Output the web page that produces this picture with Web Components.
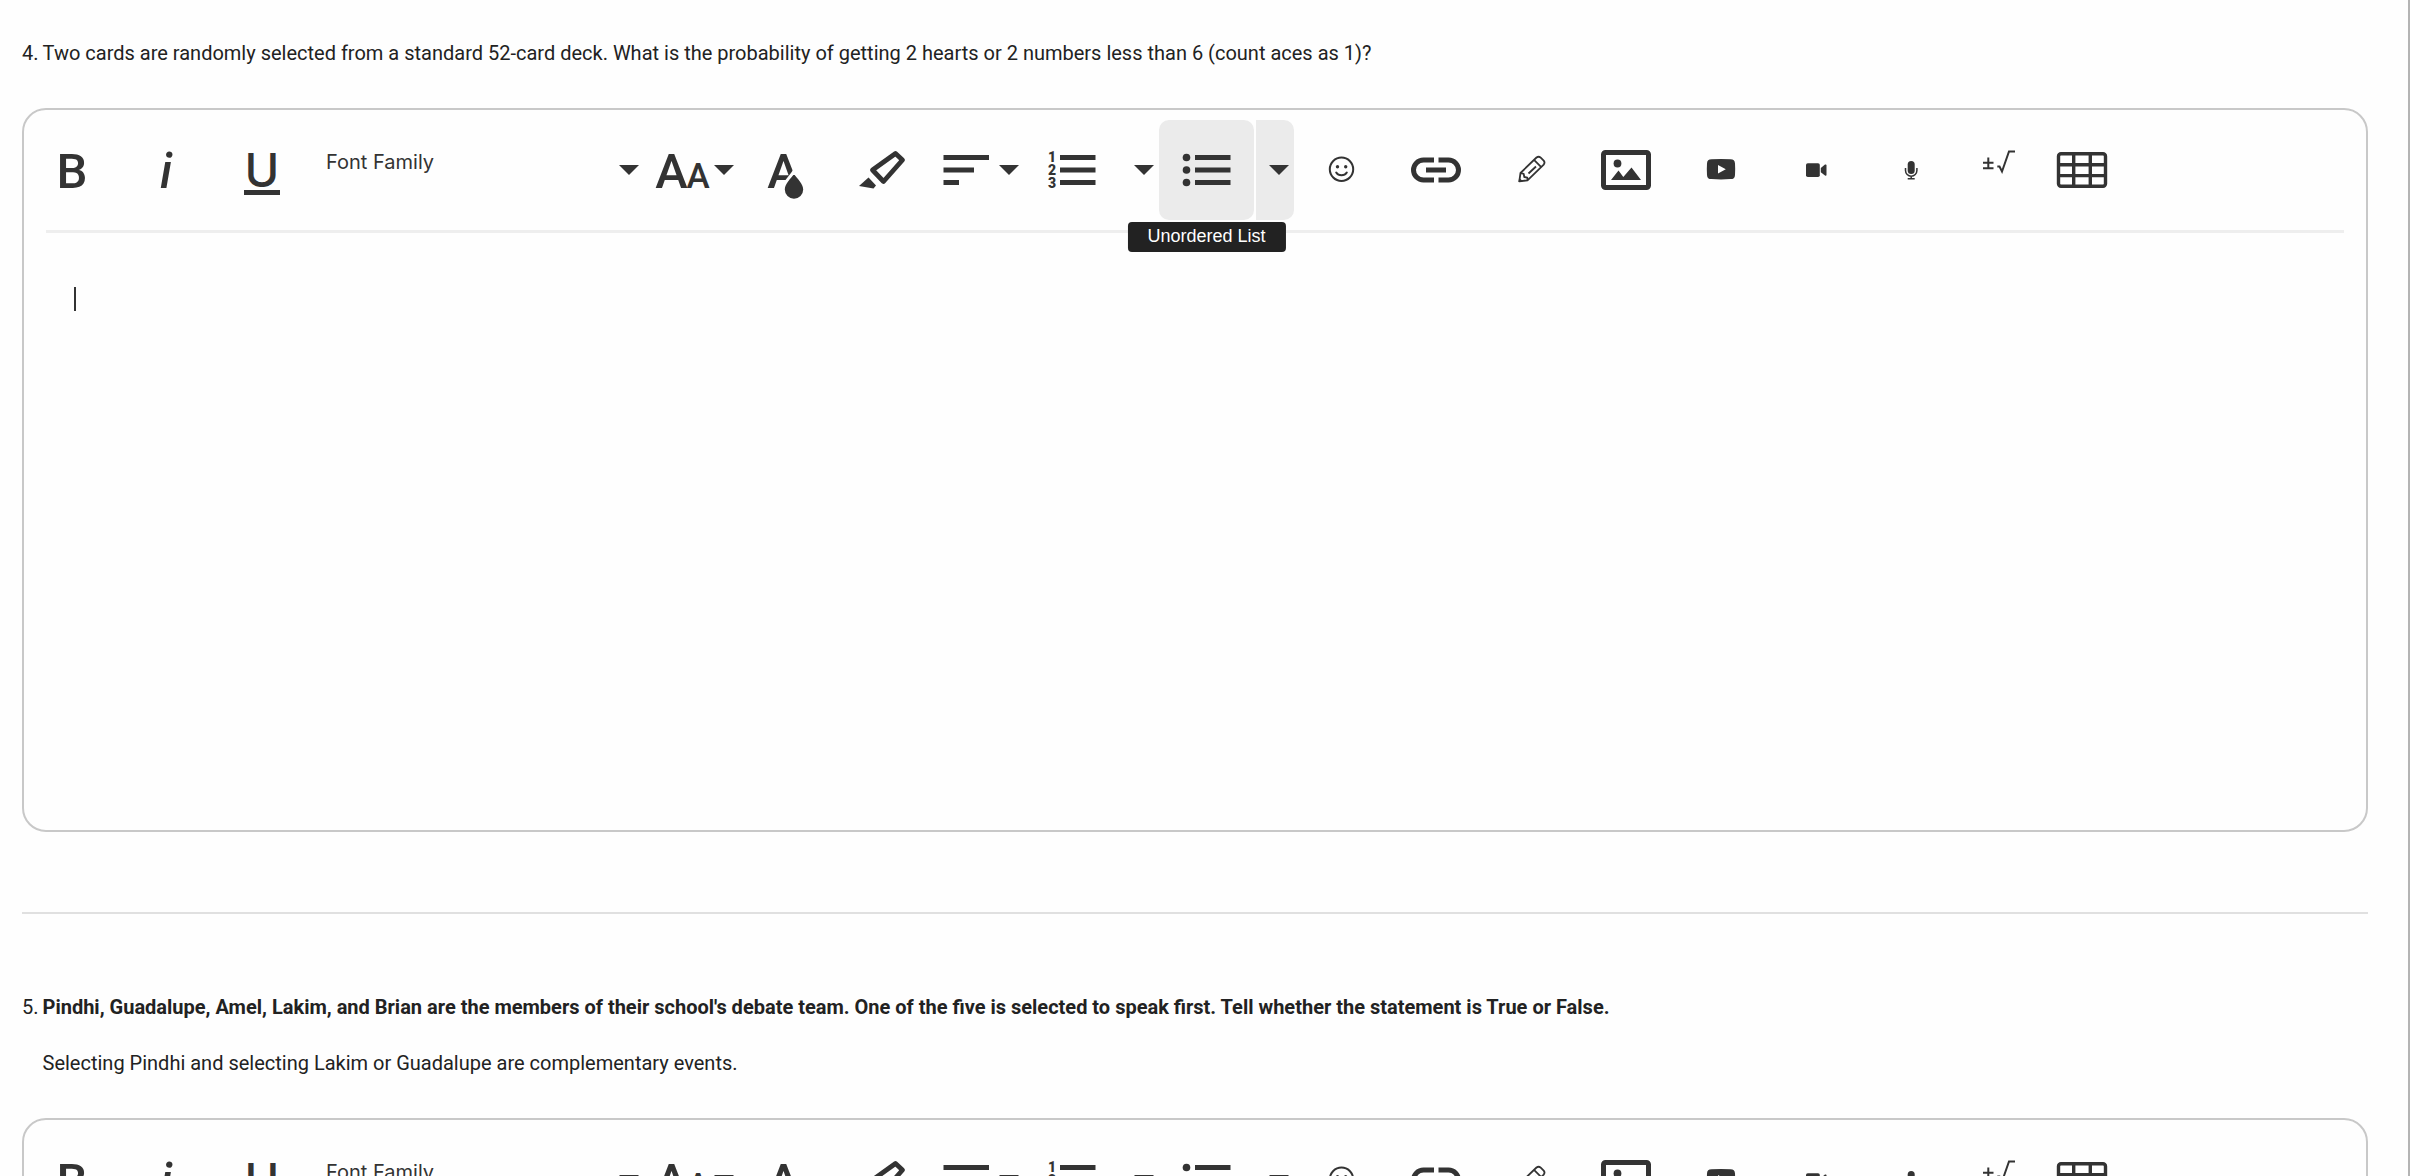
<!DOCTYPE html>
<html lang="en">
<head>
<meta charset="utf-8">
<title>Assessment</title>
<style>
  html {
    height: 100%;
    overflow: hidden;
  }
  body {
    margin: 0;
    min-height: 100%;
    box-sizing: border-box;
    border-right: 2px solid #b4b4b4;
    background: #fefefe;
    color: #222;
    font: 20px/26px Roboto, "Liberation Sans", sans-serif;
  }
  main {
    padding: 0 40px 0 22px;
  }
  p {
    margin: 0;
  }
</style>
</head>
<body>
<main>
  <question-item number="4">
    <p>Two cards are randomly selected from a standard 52-card deck. What is the probability of getting 2 hearts or 2 numbers less than 6 (count aces as 1)?</p>
    <rich-editor slot="answer" label="Answer to question 4" active="ul" focused></rich-editor>
  </question-item>
  <question-item number="5">
    <p><b>Pindhi, Guadalupe, Amel, Lakim, and Brian are the members of their school's debate team. One of the five is selected to speak first. Tell whether the statement is True or False.</b></p>
    <p>Selecting Pindhi and selecting Lakim or Guadalupe are complementary events.</p>
    <rich-editor slot="answer" label="Answer to question 5"></rich-editor>
  </question-item>
</main>

<script>
// all icons share a 60x60 box
const LINES = '<path d="M18 15h35.5v5H18zM18 27.5h35.5v5H18zM18 40h35.5v5H18z"/>';
const ICONS = {
  bold: '<text x="30" y="48" font-size="49" font-weight="500" text-anchor="middle">B</text>',
  italic: '<text x="29" y="48" font-size="49" font-weight="500" font-style="italic" text-anchor="middle">i</text>',
  underline: '<text class="wide" x="30" y="47" font-size="47" font-weight="500" text-anchor="middle">U</text><path d="M12 50h36v5H12z"/>',
  size: '<text x="20.500" y="48" font-size="49" font-weight="500" text-anchor="middle">A</text><text x="47" y="48" font-size="35" font-weight="500" text-anchor="middle">A</text>',
  color: '<text x="26.500" y="48" font-size="49" font-weight="500" text-anchor="middle">A</text><path d="M37 34c-3 4.500-9.200 9.500-9.200 15.500a9.200 9.200 0 0 0 18.400 0c0-6-6.200-11-9.200-15.500z" stroke="#fefefe" stroke-width="6" paint-order="stroke"/>',
  highlight: '<path d="M43.500 13.500l7 6.500-19 21.500-11-11.500z" fill="none" stroke="#333" stroke-width="4.800" stroke-linejoin="round"/><path d="M7 46l9.500-8.500 7.500 8-2.500 3z"/>',
  align: '<path d="M7.500 15h45.500v5H7.500zM7.500 27.500H38v5H7.500zM7.500 40H23v5H7.500z"/>',
  ol: LINES + '<g font-size="14" font-weight="900" text-anchor="middle"><text x="10" y="22">1</text><text x="10" y="35">2</text><text x="10" y="48">3</text></g>',
  ul: LINES + '<circle cx="9.500" cy="17.500" r="3.800"/><circle cx="9.500" cy="30" r="3.800"/><circle cx="9.500" cy="42.500" r="3.800"/>',
  emoji: '<circle cx="29.500" cy="29.200" r="11.700" fill="none" stroke="#333" stroke-width="2"/><circle cx="25.500" cy="26.800" r="1.700"/><circle cx="33.700" cy="26.800" r="1.700"/><path d="M24.200 32.500c2.400 3.800 8.200 3.800 10.600 0" fill="none" stroke="#333" stroke-width="2" stroke-linecap="round"/>',
  link: '<path d="M27 20H16.500a10 10 0 0 0 0 20h10.500M31.500 20h10a10 10 0 0 1 0 20h-10M19 30h20" fill="none" stroke="#333" stroke-width="5"/>',
  pencil: '<path d="M17.300 41.300l1.200-8.300 16-15.500q2.200-1.600 4.200.1l3 3q1.600 2 0 4L25.500 40.300zM18.500 33l3.200.8.600 3.200 3 .6.200 2.700M32 19.800l7 7M26.500 33.500l7.500-7" fill="none" stroke="#333" stroke-width="1.800" stroke-linejoin="round"/><path d="M16.600 42l.6-4.300 3.700 3.600z"/>',
  image: '<rect x="6.500" y="12.500" width="45" height="35" rx="2" fill="none" stroke="#333" stroke-width="5"/><circle cx="20.500" cy="23.500" r="3.900"/><path d="M14 40l7.500-9.500 4.800 6.500 8.200-9.500 9.500 12.500z"/>',
  youtube: '<path fill-rule="evenodd" d="M19.500 19.300q9.500-.6 19 0c3 .2 4.300 1.200 4.500 4.200q.4 5.700 0 11.400c-.2 3-1.500 4-4.500 4.200q-9.500.6-19 0c-3-.2-4.300-1.200-4.500-4.200q-.4-5.700 0-11.400c.2-3 1.500-4 4.500-4.200zM26 25v8.500l7.800-4.200z"/>',
  video: '<rect x="19" y="23.200" width="13.800" height="13.800" rx="1.800"/><path d="M33.800 28l4.200-3.400q1.500-.6 1.500.8v9.400q0 1.400-1.500.8l-4.200-3.400z"/>',
  mic: '<rect x="25.700" y="21" width="7" height="13" rx="3.500"/><path d="M23.500 28v2.500a5.700 5.700 0 0 0 11.400 0V28M29.200 36.200v2.500M25.700 38.700h7" fill="none" stroke="#333" stroke-width="1.500"/>',
  formula: '<path d="M16 22.800h10.500M21.300 17.500V27.500M16 28.300h10.500M30.300 26.500h2.200l2.500 5 7-20h6" fill="none" stroke="#333" stroke-width="2"/>',
  table: '<path d="M8 13.800h42a2.500 2.500 0 0 1 2.500 2.500v27.400a2.500 2.500 0 0 1-2.500 2.500h-42a2.500 2.500 0 0 1-2.500-2.500V16.300a2.500 2.500 0 0 1 2.500-2.500zM20.700 14v32M37.300 14v32M5.500 24.700h47M5.500 35.600h47" fill="none" stroke="#333" stroke-width="3.400"/>'
};
const CARET = '<svg class="caret" viewBox="0 0 20 10" aria-hidden="true"><path d="M0 0h20L10 10z"/></svg>';

class QuestionItem extends HTMLElement {
  constructor() {
    super();
    this.attachShadow({ mode: 'open' });
    this.shadowRoot.innerHTML = `
      <style>
        :host {
          display: block;
          padding: 40px 0 80px;
        }
        :host(:not(:first-of-type)) {
          padding-top: 80px;
          border-top: 2px solid #e0e0e0;
        }
        .prompt {
          display: flex;
          gap: 4px;
          margin-bottom: 42px;
        }
        .text {
          display: flex;
          flex-direction: column;
          gap: 30px;
        }
      </style>
      <div class="prompt">
        <span>${this.getAttribute('number')}.</span>
        <div class="text"><slot></slot></div>
      </div>
      <slot name="answer"></slot>
    `;
  }
}

class ToolButton extends HTMLElement {
  constructor() {
    super();
    this.attachShadow({ mode: 'open' });
    const icon = this.getAttribute('icon');
    const label = this.getAttribute('label');
    const hasCaret = this.hasAttribute('caret') || !icon;
    this.shadowRoot.innerHTML = `
      <style>
        :host {
          display: block;
          position: relative;
          flex: none;
          width: 95px;
        }
        :host([narrow]) {
          width: 76px;
        }
        :host(:not([icon])) {
          width: 38px;
        }
        button {
          display: flex;
          align-items: center;
          justify-content: center;
          width: 100%;
          height: 100px;
          padding: 0;
          border: 0;
          border-radius: 10px;
          background: none;
          cursor: pointer;
        }
        button.has-caret {
          justify-content: flex-end;
          gap: 3px;
          padding-right: 5px;
        }
        :host([active]) button {
          background: #ebebeb;
        }
        :host([active]:not([icon])) button {
          border-radius: 0 10px 10px 0;
        }
        svg {
          flex: none;
          width: 60px;
          height: 60px;
          fill: #333;
          font-family: Roboto, "Liberation Sans", sans-serif;
        }
        .wide {
          font-family: Inter, "Liberation Sans", sans-serif;
        }
        .caret {
          width: 20px;
          height: 10px;
        }
        .tip {
          position: absolute;
          z-index: 1;
          top: 102px;
          left: 50%;
          transform: translateX(-50%);
          padding: 0 20px 2px;
          border-radius: 4px;
          background: #222;
          color: #fff;
          font: 18px/28px "Liberation Sans", Arial, sans-serif;
          white-space: nowrap;
        }
      </style>
      <button type="button" class="${hasCaret ? 'has-caret' : ''}" aria-label="${label}">
        ${icon ? `<svg viewBox="0 0 60 60" aria-hidden="true">${ICONS[icon]}</svg>` : ''}
        ${hasCaret ? CARET : ''}
      </button>
      ${icon && this.hasAttribute('active') ? `<span class="tip" role="tooltip">${label}</span>` : ''}
    `;
  }
}

class FontSelect extends HTMLElement {
  constructor() {
    super();
    this.attachShadow({ mode: 'open' });
    this.shadowRoot.innerHTML = `
      <style>
        :host {
          display: grid;
          flex: none;
          align-items: center;
          width: 335px;
          height: 100px;
        }
        select, svg {
          grid-area: 1 / 1;
        }
        select {
          appearance: none;
          height: 100%;
          padding: 0 30px 16px 17px;
          border: 0;
          background: none;
          color: #333;
          font: 20px/26px Inter, "Liberation Sans", sans-serif;
        }
        svg {
          justify-self: end;
          width: 20px;
          height: 10px;
          margin-right: 5px;
          fill: #333;
          pointer-events: none;
        }
      </style>
      <select aria-label="Font Family"><option>Font Family</option></select>
      ${CARET}
    `;
  }
}

class RichEditor extends HTMLElement {
  constructor() {
    super();
    this.attachShadow({ mode: 'open' });
    const on = name => this.getAttribute('active') === name ? 'active' : '';
    this.shadowRoot.innerHTML = `
      <style>
        :host {
          display: block;
          border: 2px solid #c8c8c8;
          border-radius: 24px;
        }
        .toolbar {
          display: flex;
          padding: 10px 0;
        }
        .split {
          display: flex;
          gap: 2px;
        }
        hr {
          height: 3px;
          margin: 0 22px;
          border: 0;
          background: #eee;
        }
        .body {
          display: grid;
        }
        textarea, .cursor {
          grid-area: 1 / 1;
        }
        textarea {
          box-sizing: border-box;
          min-height: 597px;
          padding: 52px;
          border: 0;
          outline: 0;
          border-radius: 0 0 22px 22px;
          background: none;
          color: inherit;
          font: inherit;
          resize: none;
        }
        .cursor {
          width: 2px;
          height: 24px;
          margin: 54px 50px;
          background: #333;
          pointer-events: none;
        }
      </style>
      <div class="toolbar" role="toolbar">
        <tool-button icon="bold" label="Bold"></tool-button>
        <tool-button icon="italic" label="Italic"></tool-button>
        <tool-button icon="underline" label="Underline"></tool-button>
        <font-select></font-select>
        <tool-button icon="size" label="Font Size" caret></tool-button>
        <tool-button icon="color" label="Text Color"></tool-button>
        <tool-button icon="highlight" label="Background Color"></tool-button>
        <tool-button icon="align" label="Align" caret></tool-button>
        <div class="split">
          <tool-button icon="ol" label="Ordered List" ${on('ol')}></tool-button>
          <tool-button label="Ordered List Options" ${on('ol')}></tool-button>
        </div>
        <div class="split">
          <tool-button icon="ul" label="Unordered List" ${on('ul')}></tool-button>
          <tool-button label="Unordered List Options" ${on('ul')}></tool-button>
        </div>
        <tool-button icon="emoji" label="Emoticons"></tool-button>
        <tool-button icon="link" label="Insert Link"></tool-button>
        <tool-button icon="pencil" label="Draw"></tool-button>
        <tool-button icon="image" label="Insert Image"></tool-button>
        <tool-button icon="youtube" label="Insert YouTube Video"></tool-button>
        <tool-button icon="video" label="Record Video"></tool-button>
        <tool-button icon="mic" label="Record Audio"></tool-button>
        <tool-button icon="formula" label="Insert Equation" narrow></tool-button>
        <tool-button icon="table" label="Insert Table"></tool-button>
      </div>
      <hr>
      <div class="body">
        <textarea aria-label="${this.getAttribute('label')}"></textarea>
        ${this.hasAttribute('focused') ? '<span class="cursor"></span>' : ''}
      </div>
    `;
  }
}

customElements.define('tool-button', ToolButton);
customElements.define('font-select', FontSelect);
customElements.define('rich-editor', RichEditor);
customElements.define('question-item', QuestionItem);
</script>
</body>
</html>
